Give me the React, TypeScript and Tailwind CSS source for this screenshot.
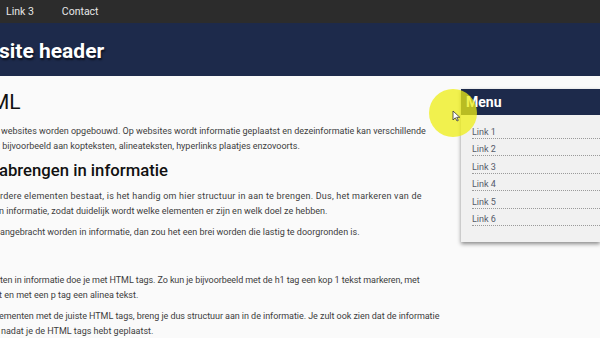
import React from "react";

function Line({ text, ml = 0, ls = 0 }: { text: string; ml?: number; ls?: number }) {
  return (
    <div className="whitespace-nowrap leading-[15px] h-[15px]" style={{ marginLeft: ml, letterSpacing: ls }}>
      {text}
    </div>
  );
}

export default function App() {
  const links = ["Link 1", "Link 2", "Link 3", "Link 4", "Link 5", "Link 6"];
  return (
    <div
      className="relative w-[600px] h-[338px] overflow-hidden bg-[#fafafa] text-[#3d3d3d]"
      style={{ fontFamily: "Roboto, 'Noto Sans', sans-serif" }}
    >
      <nav className="h-[23px] bg-[#2c2c2c] flex items-center text-[10.5px] text-[#e6e6e6]">
        <span className="ml-[6px]">Link 3</span>
        <span className="ml-[28px]">Contact</span>
      </nav>
      <header className="h-[53px] bg-[#1d2a4b] flex items-center pt-[4px]">
        <h1
          className="text-[21px] font-bold text-white ml-[-1px] whitespace-nowrap"
          style={{ textShadow: "1px 2px 2px rgba(0,0,0,0.6)" }}
        >
          site header
        </h1>
      </header>
      <div className="flex">
        <main className="w-[461px] shrink-0 overflow-hidden pt-[11px] text-[9px]">
          <h2 className="text-[21px] leading-[30px] text-[#111] ml-[-9px] whitespace-nowrap">ML</h2>
          <div className="mt-[7px]">
            <Line text=" websites worden opgebouwd. Op websites wordt informatie geplaatst en dezeinformatie kan verschillende" ml={1} />
            <Line text="t bijvoorbeeld aan kopteksten, alineateksten, hyperlinks plaatjes enzovoorts." ml={-3} />
          </div>
          <h3 className="mt-[5px] text-[16.7px] leading-[24px] font-medium text-[#111] whitespace-nowrap ml-[-1px]">
            abrengen in informatie
          </h3>
          <div className="mt-[6px]">
            <Line text="rdere elementen bestaat, is het handig om hier structuur in aan te brengen. Dus, het markeren van de" ml={0} ls={0.22} />
            <Line text="n informatie, zodat duidelijk wordt welke elementen er zijn en welk doel ze hebben." ml={-1} />
          </div>
          <div className="mt-[6px]">
            <Line text="angebracht worden in informatie, dan zou het een brei worden die lastig te doorgronden is." ml={0} />
          </div>
          <div className="mt-[33px]">
            <Line text="ten in informatie doe je met HTML tags. Zo kun je bijvoorbeeld met de h1 tag een kop 1 tekst markeren, met" ml={0} ls={-0.08} />
            <Line text="t en met een p tag een alinea tekst." ml={-1} />
          </div>
          <div className="mt-[6px]">
            <Line text="ementen met de juiste HTML tags, breng je dus structuur aan in de informatie. Je zult ook zien dat de informatie" ml={-1} ls={-0.05} />
            <Line text=" nadat je de HTML tags hebt geplaatst." ml={1} />
          </div>
        </main>
        <aside className="mt-[13px] w-[139px] shrink-0 bg-[#f1f1f1] shadow-[0_2px_4px_rgba(0,0,0,0.45)] h-[153px]">
          <div className="h-[26px] bg-[#1d2a4b] flex items-center pl-[5px] text-[14px] font-bold text-white">
            Menu
          </div>
          <ul className="ml-[11px] pt-[6px]">
            {links.map((l) => (
              <li
                key={l}
                className="pt-[4.5px] leading-[12px] text-[9px] text-[#555a6a] border-b border-dotted border-[#9a9a9a]"
              >
                {l}
              </li>
            ))}
          </ul>
        </aside>
      </div>
      <div className="absolute left-[429px] top-[89px] w-[48px] h-[48px] rounded-full bg-[rgba(238,238,20,0.75)]" />
      <svg className="absolute left-[452px] top-[110px]" width="9" height="12" viewBox="0 0 9 12">
        <path d="M1 1 L1 10 L3.3 7.8 L5 11 L6.3 10.4 L4.7 7.3 L7.8 7.3 Z" fill="#fff" stroke="#333" strokeWidth="0.8" />
      </svg>
    </div>
  );
}
